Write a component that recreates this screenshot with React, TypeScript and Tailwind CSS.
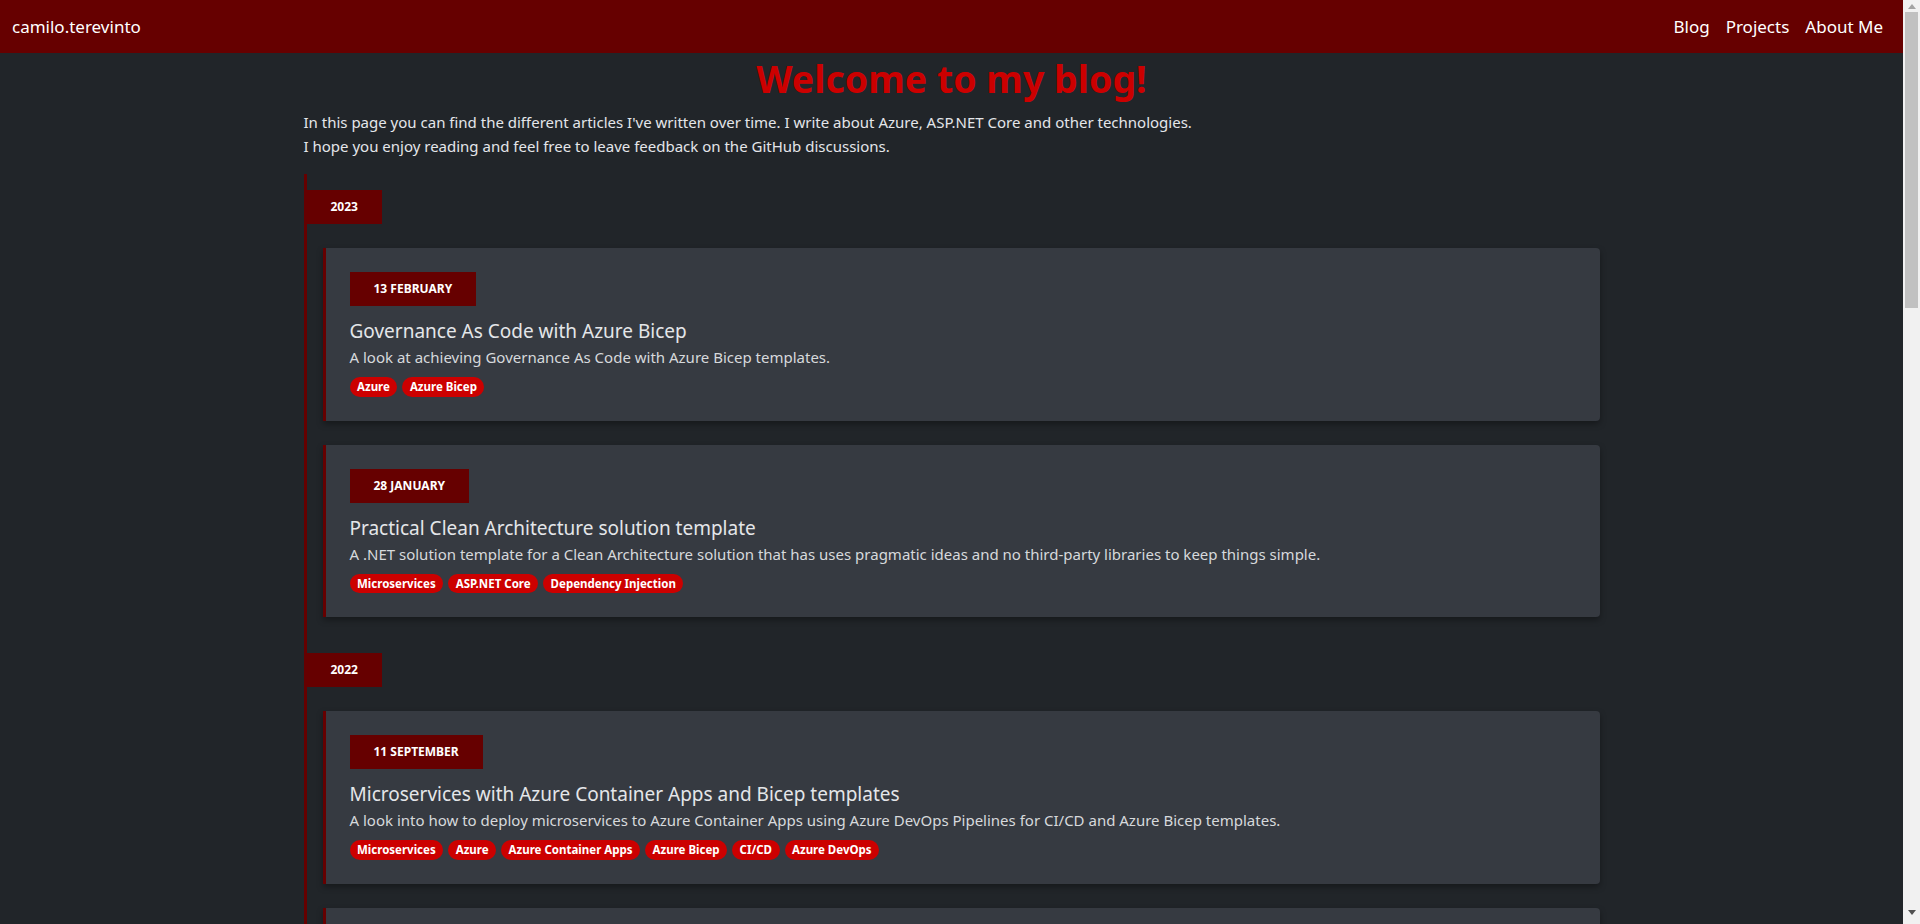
import React from 'react';

type Post = {
    date: string;
    title: string;
    description: string;
    tags: string[];
};

type YearGroup = {
    year: string;
    posts: Post[];
};

const timeline: YearGroup[] = [
    {
        year: '2023',
        posts: [
            {
                date: '13 February',
                title: 'Governance As Code with Azure Bicep',
                description: 'A look at achieving Governance As Code with Azure Bicep templates.',
                tags: ['Azure', 'Azure Bicep'],
            },
            {
                date: '28 January',
                title: 'Practical Clean Architecture solution template',
                description:
                    'A .NET solution template for a Clean Architecture solution that has uses pragmatic ideas and no third-party libraries to keep things simple.',
                tags: ['Microservices', 'ASP.NET Core', 'Dependency Injection'],
            },
        ],
    },
    {
        year: '2022',
        posts: [
            {
                date: '11 September',
                title: 'Microservices with Azure Container Apps and Bicep templates',
                description:
                    'A look into how to deploy microservices to Azure Container Apps using Azure DevOps Pipelines for CI/CD and Azure Bicep templates.',
                tags: ['Microservices', 'Azure', 'Azure Container Apps', 'Azure Bicep', 'CI/CD', 'Azure DevOps'],
            },
            {
                date: '21 May',
                title: 'Securing Azure Functions with Azure AD',
                description: 'How to protect HTTP-triggered Azure Functions using Azure Active Directory authentication.',
                tags: ['Azure', 'Azure Functions', 'Security'],
            },
        ],
    },
];

function PostCard({ post }: { post: Post }) {
    return (
        <div className="ml-4 bg-[#363a41] border-l-[3px] border-[#660000] rounded-r-[4px] shadow-[0_3px_6px_rgba(0,0,0,0.35)] px-6 pt-6 pb-6">
            <span className="inline-block bg-[#660000] text-white text-[12px] font-bold uppercase leading-[34px] px-6">
                {post.date}
            </span>
            <h3 className="mt-[13px] text-[19px] leading-[24px] text-[#e4e6e9]">{post.title}</h3>
            <p className="mt-[2px] text-[15px] leading-[24px] text-[#d6d9dc]">{post.description}</p>
            <div className="mt-2 flex gap-[5px]">
                {post.tags.map((tag) => (
                    <span
                        key={tag}
                        className="bg-[#cc0000] text-white text-[11.5px] font-bold leading-none px-[7.5px] py-[4px] rounded-full"
                    >
                        {tag}
                    </span>
                ))}
            </div>
        </div>
    );
}

function FakeScrollbar() {
    return (
        <aside className="w-[17px] shrink-0 bg-[#f1f1f1] flex flex-col items-center">
            <div className="h-[12px] flex items-center justify-center">
                <svg width="8" height="5" viewBox="0 0 8 5">
                    <path d="M4 0 L8 5 L0 5 Z" fill="#a3a3a3" />
                </svg>
            </div>
            <div className="w-[13px] h-[296px] bg-[#c1c1c1]" />
            <div className="flex-1" />
            <div className="h-[14px] flex items-start justify-center">
                <svg width="8" height="5" viewBox="0 0 8 5">
                    <path d="M0 0 L8 0 L4 5 Z" fill="#505050" />
                </svg>
            </div>
        </aside>
    );
}

export default function App() {
    return (
        <div className="flex h-screen overflow-hidden bg-[#212529] font-['Noto_Sans',sans-serif] text-[#dee2e6]">
            <div className="flex-1 min-w-0 overflow-hidden">
                {/* Navbar */}
                <nav className="h-[53px] bg-[#660000] flex items-center justify-between pl-3 pr-5">
                    <a className="text-white text-[17px]">camilo.terevinto</a>
                    <div className="flex items-center gap-[16px] text-white text-[17px]">
                        <a>Blog</a>
                        <a>Projects</a>
                        <a>About Me</a>
                    </div>
                </nav>

                <main className="w-[1296px] mx-auto pb-10">
                    <h1 className="mt-[2px] text-center text-[37.5px] leading-[48px] font-bold text-[#cc0000]">
                        Welcome to my blog!
                    </h1>
                    <p className="mt-[7px] text-[15px] leading-[24px] text-[#e4e6e9]">
                        In this page you can find the different articles I've written over time. I write about Azure,
                        ASP.NET Core and other technologies.
                        <br />
                        I hope you enjoy reading and feel free to leave feedback on the GitHub discussions.
                    </p>

                    {/* Timeline */}
                    <div className="mt-4 border-l-[3px] border-[#660000] pt-4 flex flex-col gap-9">
                        {timeline.map((group) => (
                            <section key={group.year}>
                                <span className="inline-block bg-[#660000] text-white text-[12px] font-bold leading-[34px] px-6">
                                    {group.year}
                                </span>
                                <div className="mt-6 flex flex-col gap-6">
                                    {group.posts.map((post) => (
                                        <PostCard key={post.title} post={post} />
                                    ))}
                                </div>
                            </section>
                        ))}
                    </div>
                </main>
            </div>
            <FakeScrollbar />
        </div>
    );
}
